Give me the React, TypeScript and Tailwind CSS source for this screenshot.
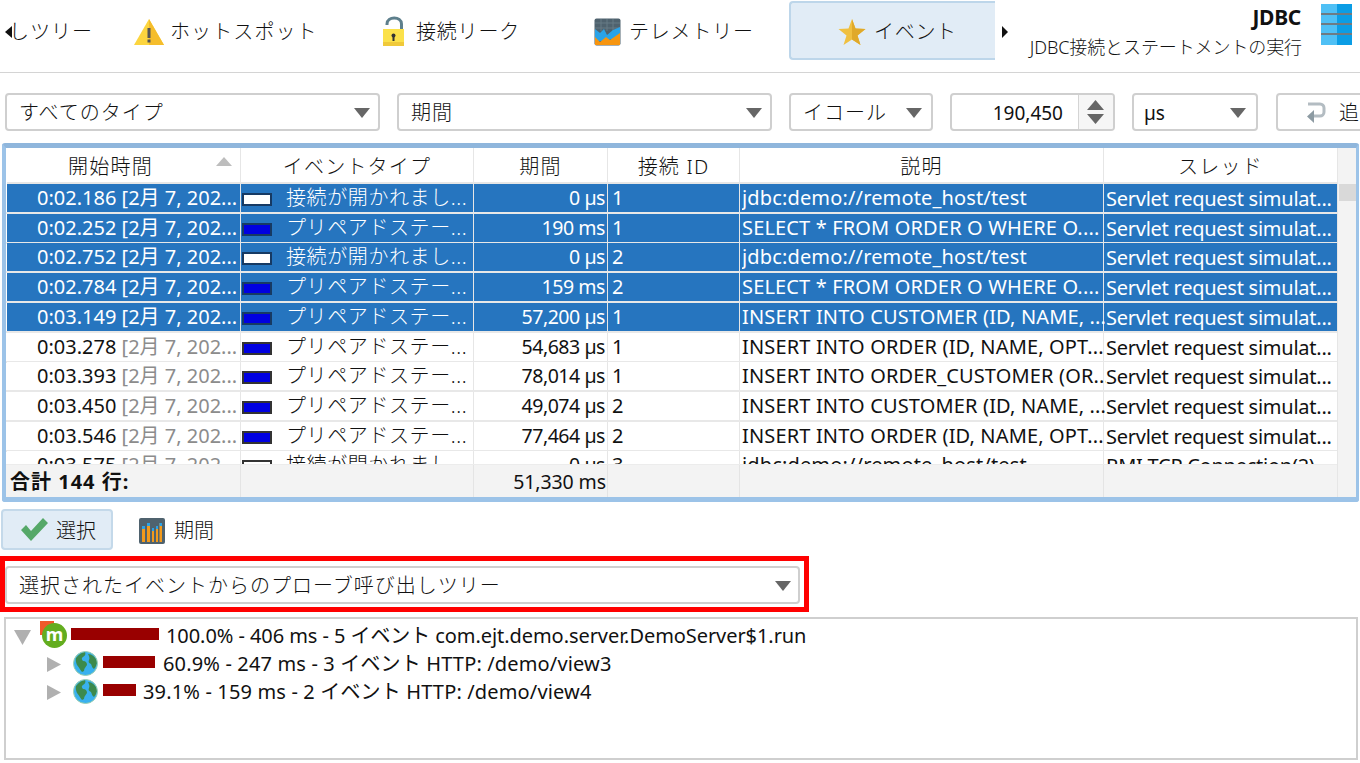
import React from "react";

const F = { fontFamily: '"Noto Sans","Noto Sans CJK JP",sans-serif' };
const cols = [
  { l: 7, w: 233 },
  { l: 241, w: 232 },
  { l: 474, w: 133 },
  { l: 608, w: 131 },
  { l: 740, w: 363 },
  { l: 1104, w: 233 },
];
const heads = ["開始時間", "イベントタイプ", "期間", "接続 ID", "説明", "スレッド"];
const OPEN = "接続が開かれまし...";
const PREP = "プリペアドステー...";
const SV = "Servlet request simulat...";
const rows: [string, string, string, string, string, string, string, boolean, string][] = [
  ["0:02.186", "[2月 7, 202...", OPEN, "0 µs", "1", "jdbc:demo://remote_host/test", "w", true, SV],
  ["0:02.252", "[2月 7, 202...", PREP, "190 ms", "1", "SELECT * FROM ORDER O WHERE O....", "b", true, SV],
  ["0:02.752", "[2月 7, 202...", OPEN, "0 µs", "2", "jdbc:demo://remote_host/test", "w", true, SV],
  ["0:02.784", "[2月 7, 202...", PREP, "159 ms", "2", "SELECT * FROM ORDER O WHERE O....", "b", true, SV],
  ["0:03.149", "[2月 7, 202...", PREP, "57,200 µs", "1", "INSERT INTO CUSTOMER (ID, NAME, ...", "b", true, SV],
  ["0:03.278", "[2月 7, 202...", PREP, "54,683 µs", "1", "INSERT INTO ORDER (ID, NAME, OPT...", "b", false, SV],
  ["0:03.393", "[2月 7, 202...", PREP, "78,014 µs", "1", "INSERT INTO ORDER_CUSTOMER (OR...", "b", false, SV],
  ["0:03.450", "[2月 7, 202...", PREP, "49,074 µs", "2", "INSERT INTO CUSTOMER (ID, NAME, ...", "b", false, SV],
  ["0:03.546", "[2月 7, 202...", PREP, "77,464 µs", "2", "INSERT INTO ORDER (ID, NAME, OPT...", "b", false, SV],
  ["0:03.575", "[2月 7, 202...", OPEN, "0 µs", "3", "jdbc:demo://remote_host/test", "w", false, "RMI TCP Connection(2)..."],
];

function Caret({ x, y }: { x: number; y: number }) {
  return (
    <svg className="absolute" style={{ left: x, top: y }} width="16" height="10" viewBox="0 0 16 10">
      <path d="M0 0H16L8 10Z" fill="#666" />
    </svg>
  );
}

function Combo({ l, w, text, caret, top = 93, h = 38 }: { l: number; w: number; text: string; caret: number; top?: number; h?: number }) {
  return (
    <div
      className="absolute rounded-[4px] border-2 border-[#cfcfcf] bg-white text-[20px] leading-[36px] text-[#111] font-light pl-[12px] whitespace-nowrap tracking-[1px]"
      style={{ left: l, top, width: w, height: h }}
    >
      {text}
      <Caret x={caret - l - 2} y={13} />
    </div>
  );
}

function TabLabel({ x, text, t = "tracking-[1px]" }: { x: number; text: string; t?: string }) {
  return (
    <div className={`absolute top-[16px] text-[20px] leading-[32px] font-light text-[#111] whitespace-nowrap ${t}`} style={{ left: x }}>
      {text}
    </div>
  );
}

function Globe({ x, y }: { x: number; y: number }) {
  return (
    <svg className="absolute" style={{ left: x, top: y }} width="25" height="25" viewBox="0 0 25 25">
      <circle cx="12.5" cy="12.5" r="12" fill="#39b1ee" />
      <path d="M3 7C6 3 9 1.5 12 1c1 2 0 4-2 5-2 1-1 3 0 4 3 0 4 2 4 4-1 2-3 3-3 6l-2 1C7 19 6 16 4 14 3 12 2.5 9 3 7Z" fill="#3c8a4c" />
      <path d="M15 3c4 0 7 3 9 7 0 3-1 6-3 8-2-1-2-3-3-5-2-1-3-2-2-4 1-2 0-4-1-6Z" fill="#3c8a4c" />
      <circle cx="12.5" cy="12.5" r="12" fill="none" stroke="#9ccfb0" strokeWidth="1" />
    </svg>
  );
}

export default function App() {
  return (
    <div className="relative w-[1360px] h-[763px] overflow-hidden bg-white" style={F}>
      {/* toolbar */}
      <svg className="absolute left-[5px] top-[26px]" width="7" height="12" viewBox="0 0 7 12"><path d="M7 0V12L0 6Z" fill="#111" /></svg>
      <div className="absolute left-[12px] top-[16px] w-[80px] overflow-hidden h-[32px] text-[20px] leading-[32px] font-light text-[#111] whitespace-nowrap tracking-[1px]">
        <span className="relative -left-[3px]">しツリー</span>
      </div>

      <svg className="absolute left-[134px] top-[18px]" width="30" height="28" viewBox="0 0 30 28">
        <path d="M15 1L30 27H0Z" fill="#fcd53f" />
        <path d="M15 1L30 27H15Z" fill="#f5bd2c" />
        <rect x="13.5" y="10" width="3" height="10" fill="#555" />
        <rect x="13.5" y="21.5" width="3" height="3" fill="#555" />
      </svg>
      <TabLabel x={170} text="ホットスポット" t="tracking-[1.1px]" />

      <svg className="absolute left-[382px] top-[16px]" width="24" height="31" viewBox="0 0 24 31">
        <path d="M5 9V8C5 0 19.5 0 19.5 8V14" fill="none" stroke="#5d7f8c" strokeWidth="3" />
        <rect x="1" y="13" width="21" height="17" fill="#fbe14a" />
        <rect x="1" y="26" width="21" height="4" fill="#f0c93a" />
        <circle cx="11.5" cy="19.5" r="2" fill="#333" />
        <rect x="10.5" y="20" width="2" height="5" fill="#333" />
      </svg>
      <TabLabel x={416} text="接続リーク" t="tracking-[0.8px]" />

      <svg className="absolute left-[594px] top-[18px]" width="27" height="28" viewBox="0 0 27 28">
        <rect width="26" height="27" x="0.5" y="0.5" rx="2" fill="#4f626e" />
        <path d="M1 5H26M1 10H26M7 1V13M13 1V13M19 1V13" stroke="#677a85" strokeWidth="1" />
        <path d="M1 11L6 15L10 11L13 17L19 12L26 9V20L1 24Z" fill="#2aa3e8" />
        <path d="M1 19L6 24L12 19L16 22L26 15V27H1Z" fill="#f7950f" />
      </svg>
      <TabLabel x={629} text="テレメトリー" t="tracking-[0.8px]" />

      <div className="absolute left-[789px] top-[1px] w-[206px] h-[59px] bg-[#e1ecf6] border-2 border-r-0 border-[#bdd6ea] rounded-l-[4px]" />
      <svg className="absolute left-[838px] top-[18px]" width="28" height="28" viewBox="0 0 27 28">
        <path d="M13.5 1L17 10.5L27 11L19 17.5L22 27L13.5 21.5L5 27L8 17.5L0 11L10 10.5Z" fill="#f0c040" />
        <path d="M13.5 1L17 10.5L27 11L19 17.5L22 27L13.5 21.5Z" fill="#e0a92a" />
      </svg>
      <TabLabel x={874} text="イベント" t="tracking-[0.7px]" />
      <svg className="absolute left-[1002px] top-[26px]" width="6" height="12" viewBox="0 0 6 12"><path d="M0 0V12L6 6Z" fill="#111" /></svg>

      <div className="absolute right-[59px] top-[3px] text-[21px] leading-[28px] font-bold text-[#111] tracking-[-0.3px]">JDBC</div>
      <div className="absolute right-[58px] top-[33px] text-[18px] leading-[28px] font-light text-[#111] whitespace-nowrap tracking-[-0.1px]">JDBC接続とステートメントの実行</div>
      <svg className="absolute left-[1321px] top-[4px]" width="31" height="41" viewBox="0 0 31 41">
        <rect y="0" width="16" height="9" fill="#4fc0f5" />
        <rect x="16" y="0" width="15" height="9" fill="#0b9de5" />
        <rect y="9" width="31" height="2" fill="#6e7b83" />
        <rect y="11" width="16" height="8" fill="#4fc0f5" />
        <rect x="16" y="11" width="15" height="8" fill="#0b9de5" />
        <rect y="19" width="31" height="2" fill="#6e7b83" />
        <rect y="21" width="16" height="8" fill="#4fc0f5" />
        <rect x="16" y="21" width="15" height="8" fill="#0b9de5" />
        <rect y="29" width="31" height="2" fill="#6e7b83" />
        <rect y="31" width="16" height="10" fill="#4fc0f5" />
        <rect x="16" y="31" width="15" height="10" fill="#0b9de5" />
      </svg>
      <div className="absolute left-0 top-[72px] w-[1360px] h-px bg-[#d4d4d4]" />

      {/* filter bar */}
      <Combo l={5} w={375} text="すべてのタイプ" caret={354} />
      <Combo l={397} w={375} text="期間" caret={746} />
      <Combo l={789} w={144} text="イコール" caret={906} />
      <div className="absolute left-[950px] top-[93px] w-[165px] h-[38px] rounded-[4px] border-2 border-[#cfcfcf] bg-white overflow-hidden">
        <div className="absolute right-[50px] top-0 text-[19px] leading-[36px] text-[#111]">190,450</div>
        <div className="absolute right-0 top-0 w-[35px] h-full bg-[#f6f6f6] border-l border-[#d4d4d4]">
          <svg className="absolute left-[8px] top-[5px]" width="17" height="24" viewBox="0 0 17 24">
            <path d="M0 10L8.5 0L17 10Z" fill="#666" />
            <path d="M0 14H17L8.5 24Z" fill="#666" />
          </svg>
        </div>
      </div>
      <div className="absolute left-[1132px] top-[93px] w-[126px] h-[38px] rounded-[4px] border-2 border-[#cfcfcf] bg-white text-[19px] leading-[36px] text-[#111] pl-[10px]">
        µs
        <Caret x={1230 - 1132 - 2} y={13} />
      </div>
      <div className="absolute left-[1276px] top-[93px] w-[100px] h-[38px] rounded-[4px] border-2 border-[#cfcfcf] bg-white text-[20px] leading-[36px] font-light text-[#111] pl-[61px]">
        追
        <svg className="absolute left-[27px] top-[7px]" width="22" height="22" viewBox="0 0 22 22">
          <path d="M3 2H15a4 4 0 0 1 4 4V10a4 4 0 0 1-4 4H7" fill="none" stroke="#b3bcc2" strokeWidth="3" />
          <path d="M9 8L2 14.5L9 21Z" fill="#8d9ba3" />
        </svg>
      </div>

      {/* table */}
      <div className="absolute left-[2px] top-[143px] w-[1357px] h-[359px] border-l-4 border-r-[3px] border-t-[5px] border-b-[5px] border-l-[#9cc3e8] border-r-[#9cc3e8] border-b-[#9cc3e8] border-t-[#8fb6dc] rounded-[3px]" />
      <div className="absolute left-[6px] top-[148px] w-[1350px] h-[349px] overflow-hidden bg-white">
        {cols.map((c, i) => (
          <div key={i} className="absolute top-0 h-[34px] text-center text-[20px] leading-[38px] font-light text-[#111] tracking-[1.2px] whitespace-nowrap" style={{ left: c.l - 6, width: i === 0 ? 207 : c.w }}>
            {heads[i]}
          </div>
        ))}
        <div className="absolute left-[1px] top-[34px] w-[1330px] h-[2px] bg-[#e6e6e6]" />
        {cols.slice(1).map((c, i) => (
          <div key={i} className="absolute top-0 w-[1px] h-[349px] bg-[#e6e6e6]" style={{ left: c.l - 7 }} />
        ))}
        <div className="absolute left-[1331px] top-0 w-[1px] h-[349px] bg-[#e6e6e6]" />
        <svg className="absolute left-[210px] top-[9px]" width="16" height="9" viewBox="0 0 16 9"><path d="M0 9L8 0L16 9Z" fill="#bdbdbd" /></svg>

        {rows.map((r, i) => {
          const top = 36 + Math.round(i * 29.7);
          const txt = r[7] ? "text-white" : "text-[#111]";
          const bg = r[7] ? "bg-[#2675bf]" : "bg-white";
          return (
            <div key={i} className="absolute left-0 h-[28px] w-[1331px]" style={{ top }}>
              <div className="absolute left-0 right-0 top-[28px] h-[2px] bg-[#e8e8e8]" />
              {cols.map((c, j) => (
                <div key={j} className={`absolute top-0 h-[28px] ${bg}`} style={{ left: c.l - 6, width: c.w }} />
              ))}
              <div className={`absolute left-[31px] top-0 text-[20px] leading-[28px] whitespace-nowrap ${txt}`}>
                {r[0]} <span className={r[7] ? "" : "text-[#8c8c8c]"}>{r[1]}</span>
              </div>
              <div className={`absolute top-[9px] left-[236px] w-[30px] h-[13px] border-2 ${r[6] === "w" ? "bg-white" : "bg-[#0000e0]"} ${r[7] ? "border-[#173a63]" : "border-[#333]"}`} />
              <div className={`absolute left-[280px] top-0 text-[20px] leading-[28px] font-light whitespace-nowrap tracking-[0.6px] ${txt}`}>{r[2]}</div>
              <div className={`absolute left-[468px] w-[131px] text-right top-0 text-[19.5px] leading-[28px] whitespace-nowrap tracking-[-0.45px] ${txt}`}>{r[3]}</div>
              <div className={`absolute left-[606px] top-0 text-[20px] leading-[28px] ${txt}`}>{r[4]}</div>
              <div className={`absolute left-[736px] w-[364px] overflow-hidden top-0 text-[20px] leading-[28px] whitespace-nowrap tracking-[0.15px] ${txt}`}>{r[5]}</div>
              <div className={`absolute left-[1100px] top-[1px] text-[20px] leading-[28px] whitespace-nowrap tracking-[-0.25px] ${txt}`}>{r[8]}</div>
            </div>
          );
        })}

        {/* footer */}
        <div className="absolute left-0 top-[316px] w-[1331px] h-[33px] bg-[#f3f3f3] border-t border-[#ececec]">
          <div className="absolute left-[4px] top-0 text-[20px] leading-[34px] font-bold text-[#111] tracking-[1px]">合計 144 行:</div>
          <div className="absolute left-[468px] w-[132px] text-right top-0 text-[19.5px] leading-[34px] text-[#111] tracking-[-0.1px]">51,330 ms</div>
          {cols.slice(1).map((c, i) => (
            <div key={i} className="absolute top-0 w-[1px] h-[33px] bg-[#e4e4e4]" style={{ left: c.l - 7 }} />
          ))}
        </div>

        {/* scrollbar */}
        <div className="absolute left-[1332px] top-0 w-[18px] h-[349px] bg-[#f3f3f3]" />
        <div className="absolute left-[1333px] top-[36px] w-[17px] h-[17px] bg-[#d9d9d9]" />
      </div>

      {/* view buttons */}
      <div className="absolute left-[1px] top-[509px] w-[112px] h-[41px] bg-[#e1ecf6] border-2 border-[#c4d9ea] rounded-[4px] text-[20px] leading-[40px] font-light text-[#111] pl-[53px]">
        選択
        <svg className="absolute left-[18px] top-[7px]" width="27" height="23" viewBox="0 0 27 23">
          <path d="M0 12L5 7L10 13L22 0L27 5L10 23Z" fill="#55a868" />
        </svg>
      </div>
      <svg className="absolute left-[139px] top-[518px]" width="26" height="26" viewBox="0 0 26 26">
        <rect width="26" height="26" rx="2" fill="#4f626e" />
        <path d="M3 8H6V24H3ZM8 5H11V24H8ZM13 10H15V24H13ZM17 8H19V24H17ZM20.5 5H23V24H20.5Z" fill="#f29a1c" />
        <path d="M3 8H6V11H3ZM8 5H11V8H8ZM13 10H15V13H13ZM17 8H19V11H17ZM20.5 5H23V8H20.5Z" fill="#2aa3e8" />
      </svg>
      <div className="absolute left-[174px] top-[515px] text-[20px] leading-[32px] font-light text-[#111]">期間</div>

      {/* red highlight + combo */}
      <div className="absolute left-0 top-[556px] w-[809px] h-[56px] border-[5px] border-[#ff0000]" />
      <Combo l={5} w={795} text="選択されたイベントからのプローブ呼び出しツリー" caret={775} top={566} h={38} />

      {/* tree */}
      <div className="absolute left-[4px] top-[617px] w-[1354px] h-[143px] border-2 border-[#cfcfcf] bg-white" />
      <svg className="absolute left-[14px] top-[630px]" width="17" height="15" viewBox="0 0 17 15"><path d="M0 0H17L8.5 15Z" fill="#b0b0b0" /></svg>
      <div className="absolute left-[40px] top-[621px] w-[14px] h-[14px] bg-[#ef5a2a]" />
      <div className="absolute left-[42px] top-[623px] w-[25px] h-[25px] rounded-full bg-[#63ad1f] text-white text-[18px] leading-[22px] font-bold text-center">m</div>
      <div className="absolute left-[71px] top-[628px] w-[88px] h-[12px] bg-[#990000]" />
      <div className="absolute left-[166px] top-[622px] text-[20px] leading-[28px] text-[#111] whitespace-nowrap tracking-[-0.07px]">
        100.0% - 406 ms - 5 イベント com.ejt.demo.server.DemoServer$1.run
      </div>

      <svg className="absolute left-[47px] top-[657px]" width="14" height="15" viewBox="0 0 14 15"><path d="M0 0L14 7.5L0 15Z" fill="#b0b0b0" /></svg>
      <Globe x={73} y={651} />
      <div className="absolute left-[103px] top-[656px] w-[52px] h-[12px] bg-[#990000]" />
      <div className="absolute left-[163px] top-[650px] text-[20px] leading-[28px] text-[#111] whitespace-nowrap tracking-[0.15px]">
        60.9% - 247 ms - 3 イベント HTTP: /demo/view3
      </div>

      <svg className="absolute left-[47px] top-[685px]" width="14" height="15" viewBox="0 0 14 15"><path d="M0 0L14 7.5L0 15Z" fill="#b0b0b0" /></svg>
      <Globe x={73} y={679} />
      <div className="absolute left-[103px] top-[684px] w-[33px] h-[12px] bg-[#990000]" />
      <div className="absolute left-[143px] top-[678px] text-[20px] leading-[28px] text-[#111] whitespace-nowrap tracking-[0.15px]">
        39.1% - 159 ms - 2 イベント HTTP: /demo/view4
      </div>
    </div>
  );
}
